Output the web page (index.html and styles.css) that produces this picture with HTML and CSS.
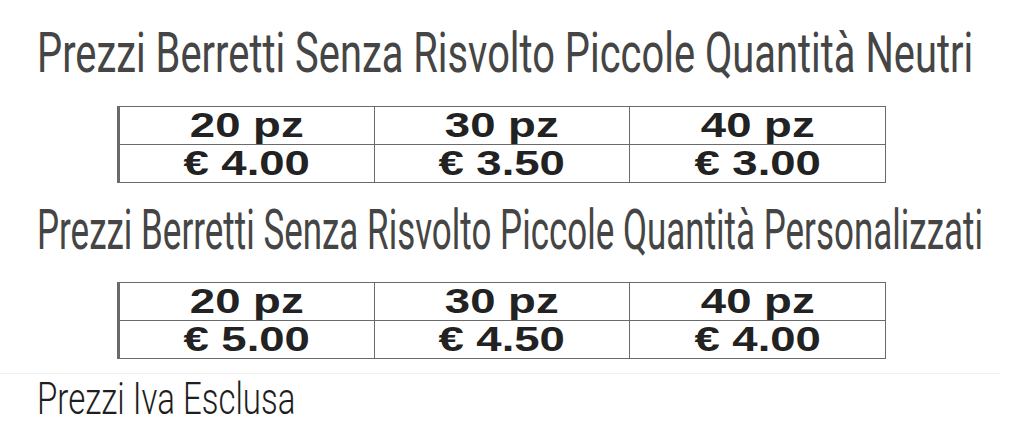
FILE: index.html
```html
<!DOCTYPE html>
<html lang="it">
<head>
<meta charset="utf-8">
<title>Prezzi Berretti</title>
<link rel="stylesheet" href="styles.css">
</head>
<body>
<main class="page">
  <h1 class="title title-1"><span class="fit fit-1">Prezzi Berretti Senza Risvolto Piccole Quantità Neutri</span></h1>
  <table class="prices prices-1">
    <tr><td><span class="wide">20 pz</span></td><td><span class="wide">30 pz</span></td><td><span class="wide">40 pz</span></td></tr>
    <tr><td><span class="wide">€ 4.00</span></td><td><span class="wide">€ 3.50</span></td><td><span class="wide">€ 3.00</span></td></tr>
  </table>
  <h1 class="title title-2"><span class="fit fit-2">Prezzi Berretti Senza Risvolto Piccole Quantità Personalizzati</span></h1>
  <table class="prices prices-2">
    <tr><td><span class="wide">20 pz</span></td><td><span class="wide">30 pz</span></td><td><span class="wide">40 pz</span></td></tr>
    <tr><td><span class="wide">€ 5.00</span></td><td><span class="wide">€ 4.50</span></td><td><span class="wide">€ 4.00</span></td></tr>
  </table>
  <div class="rule"></div>
  <p class="note"><span class="fit fit-3">Prezzi Iva Esclusa</span></p>
</main>
</body>
</html>
```

FILE: styles.css
```css
html, body {
  margin: 0;
  padding: 0;
  background: #ffffff;
}

.page {
  width: 1024px;
  height: 442px;
  overflow: hidden;
  display: flex;
  flex-direction: column;
}

.title {
  margin: 0;
  padding-left: 37px;
  height: 55px;
  font-family: Roboto, "Liberation Sans", sans-serif;
  font-weight: 400;
  font-size: 55px;
  line-height: 55px;
  color: #454545;
  white-space: nowrap;
}

.title-1 { margin-top: 26px; }
.title-2 { margin-top: 20px; }

.fit {
  display: inline-block;
  transform-origin: left center;
}
.fit-1 { transform: scaleX(0.725); }
.fit-2 { transform: scaleX(0.636); }
.fit-3 { transform: scaleX(0.75); }

.prices {
  margin-left: 117px;
  width: 769px;
  border-collapse: collapse;
  table-layout: fixed;
  font-family: "Liberation Sans", Arial, sans-serif;
  font-weight: 700;
  font-size: 35px;
  color: #222222;
  border-left: 3px solid #6a6a6a;
}

.prices-1 { margin-top: 25px; }
.prices-2 { margin-top: 24px; }

.prices td {
  border: 1.5px solid #6a6a6a;
  height: 36px;
  padding: 0 0 1px 0;
  line-height: 34px;
  text-align: center;
  vertical-align: middle;
}

.prices td:first-child {
  border-left: 3px solid #6a6a6a;
}

.wide {
  display: inline-block;
  transform: scaleX(1.3);
  transform-origin: center center;
}

.rule {
  margin-top: 14px;
  height: 1px;
  width: 1000px;
  background: #f1f1f1;
}

.note {
  margin: 3px 0 0 0;
  padding-left: 37px;
  font-family: Roboto, "Liberation Sans", sans-serif;
  font-weight: 300;
  font-size: 44px;
  line-height: 44px;
  color: #1e1e1e;
  white-space: nowrap;
}
```
